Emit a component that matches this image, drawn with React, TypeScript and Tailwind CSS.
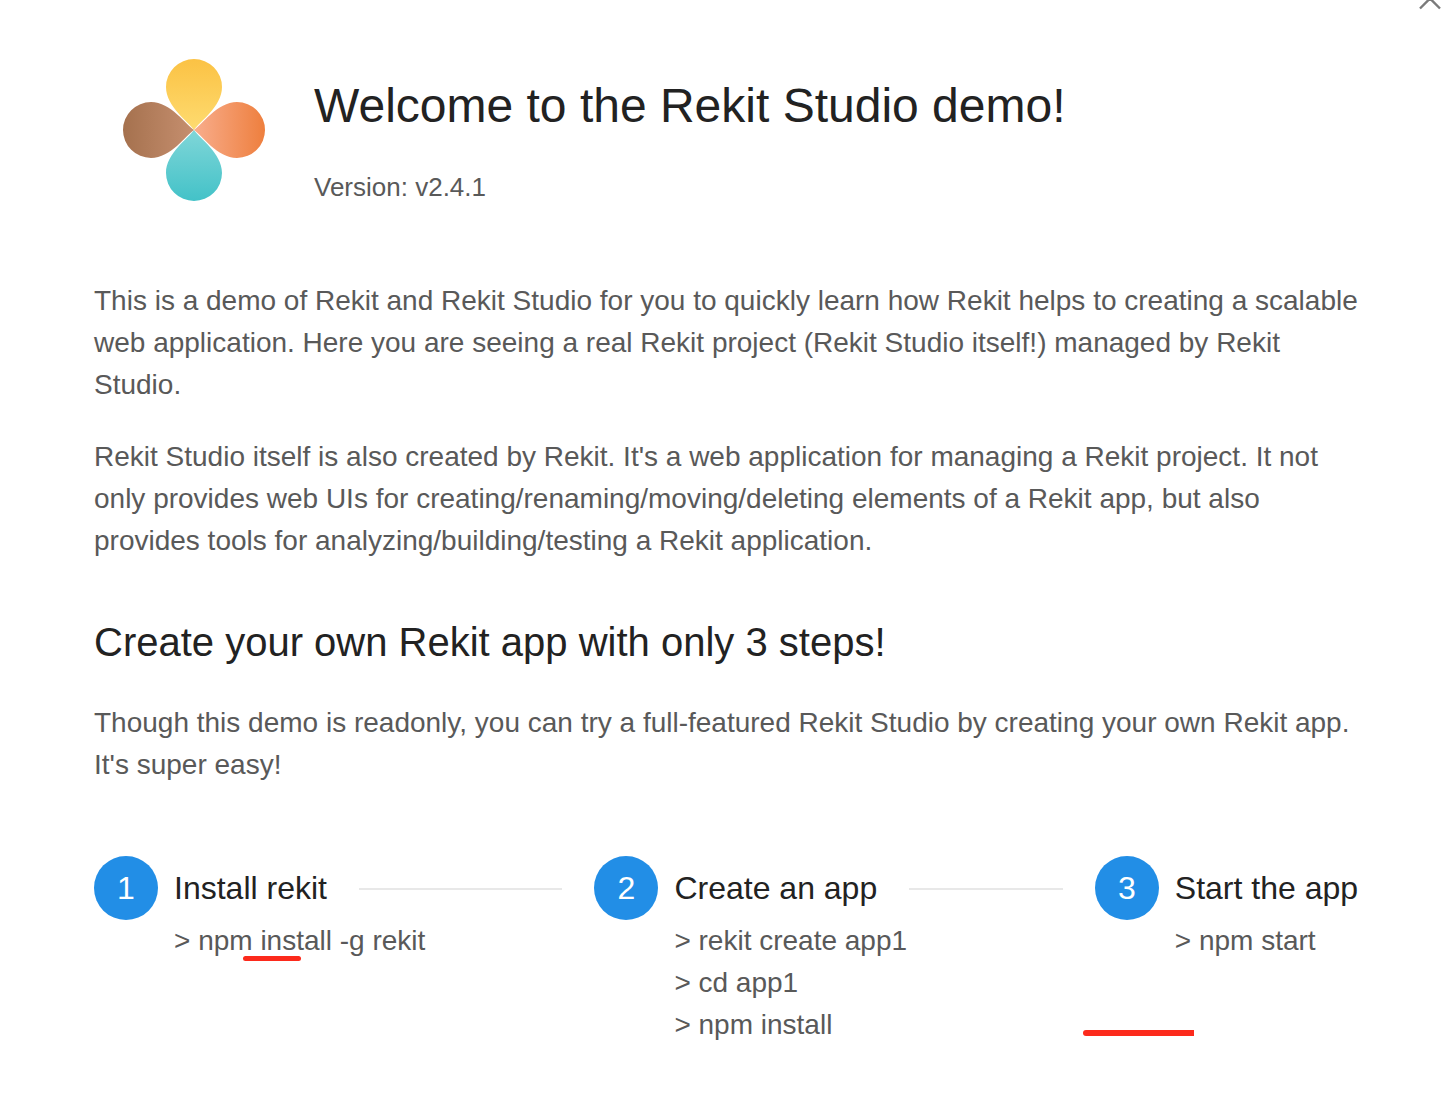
import React from "react";

function Logo() {
  const petal = "M0 0 C-5 -8 -28 -23 -28 -43 A28 28 0 0 1 28 -43 C28 -23 5 -8 0 0 Z";
  return (
    <svg width="144" height="144" viewBox="-72 -72 144 144" className="block shrink-0">
      <defs>
        <linearGradient id="gt" x1="0" y1="0" x2="0" y2="1">
          <stop offset="0" stopColor="#fbc244" />
          <stop offset="1" stopColor="#fedb70" />
        </linearGradient>
        <linearGradient id="gb" x1="0" y1="0" x2="0" y2="1">
          <stop offset="0" stopColor="#43c2c8" />
          <stop offset="1" stopColor="#80d6d8" />
        </linearGradient>
        <linearGradient id="gr" x1="0" y1="0" x2="0" y2="1">
          <stop offset="0" stopColor="#ee7f3e" />
          <stop offset="1" stopColor="#f8ad8c" />
        </linearGradient>
        <linearGradient id="gl" x1="0" y1="0" x2="0" y2="1">
          <stop offset="0" stopColor="#a5714e" />
          <stop offset="1" stopColor="#c68f6f" />
        </linearGradient>
      </defs>
      <path d={petal} fill="url(#gt)" />
      <path d={petal} fill="url(#gr)" transform="rotate(90)" />
      <path d={petal} fill="url(#gb)" transform="rotate(180)" />
      <path d={petal} fill="url(#gl)" transform="rotate(270)" />
    </svg>
  );
}

function Step({ n, title, lines, grow }: { n: number; title: string; lines: string[]; grow?: boolean }) {
  return (
    <div className={grow ? "flex-1 flex" : "flex"}>
      <div className="w-16 h-16 rounded-full bg-[#228ee6] text-white text-[32px] leading-[64px] text-center shrink-0">{n}</div>
      <div className={grow ? "ml-4 flex-1" : "ml-4"}>
        <div className="flex items-center h-16">
          <span className="text-[32px] leading-[64px] text-[#222222] whitespace-nowrap">{title}</span>
          {grow && <div className="h-0.5 bg-[#e8e8e8] flex-1 ml-8 mt-0.5" />}
        </div>
        <div className="text-[28px] leading-[42px] text-[#595959] whitespace-nowrap">
          {lines.map((l) => (
            <div key={l}>{l}</div>
          ))}
        </div>
      </div>
    </div>
  );
}

export default function App() {
  return (
    <div className="relative w-[1454px] h-[1096px] overflow-hidden bg-white pl-[94px] pr-[96px] font-['Liberation_Sans',Arial,sans-serif]">
      <svg width="24" height="10" viewBox="0 0 24 10" className="absolute left-[1418px] top-0">
        <path d="M2 8.5 L12 -1.5 L22 8.5" fill="none" stroke="#7a7a7a" strokeWidth="2.4" />
      </svg>

      <div className="flex pt-[58px] pl-[28px]">
        <Logo />
        <div className="ml-[48px]">
          <h1 className="text-[48px] leading-[56px] text-[#222222] mt-[20px] whitespace-nowrap">Welcome to the Rekit Studio demo!</h1>
          <p className="text-[26px] leading-[42px] text-[#595959] mt-[32px] whitespace-nowrap">Version: v2.4.1</p>
        </div>
      </div>

      <div className="text-[28px] leading-[42px] text-[#595959] mt-[72px]">
        <p>This is a demo of Rekit and Rekit Studio for you to quickly learn how Rekit helps to creating a scalable web application. Here you are seeing a real Rekit project (Rekit Studio itself!) managed by Rekit Studio.</p>
        <p className="mt-[30px]">Rekit Studio itself is also created by Rekit. It's a web application for managing a Rekit project. It not only provides web UIs for creating/renaming/moving/deleting elements of a Rekit app, but also provides tools for analyzing/building/testing a Rekit application.</p>
      </div>

      <h2 className="text-[40px] leading-[56px] text-[#222222] mt-[52px]">Create your own Rekit app with only 3 steps!</h2>
      <p className="text-[28px] leading-[42px] text-[#595959] mt-[32px]">Though this demo is readonly, you can try a full-featured Rekit Studio by creating your own Rekit app. It's super easy!</p>

      <div className="flex mt-[70px]">
        <Step n={1} title="Install rekit" lines={["> npm install -g rekit"]} grow />
        <div className="w-8 shrink-0" />
        <Step n={2} title="Create an app" lines={["> rekit create app1", "> cd app1", "> npm install"]} grow />
        <div className="w-8 shrink-0" />
        <Step n={3} title="Start the app" lines={["> npm start"]} />
      </div>

      <div className="absolute left-[243px] top-[956px] w-[58px] h-[5px] rounded-full bg-[#fc2a1c]" />
      <div className="absolute left-[1083px] top-[1030px] w-[111px] h-[6px] rounded-l-full bg-[#fc2a1c]" />
    </div>
  );
}
